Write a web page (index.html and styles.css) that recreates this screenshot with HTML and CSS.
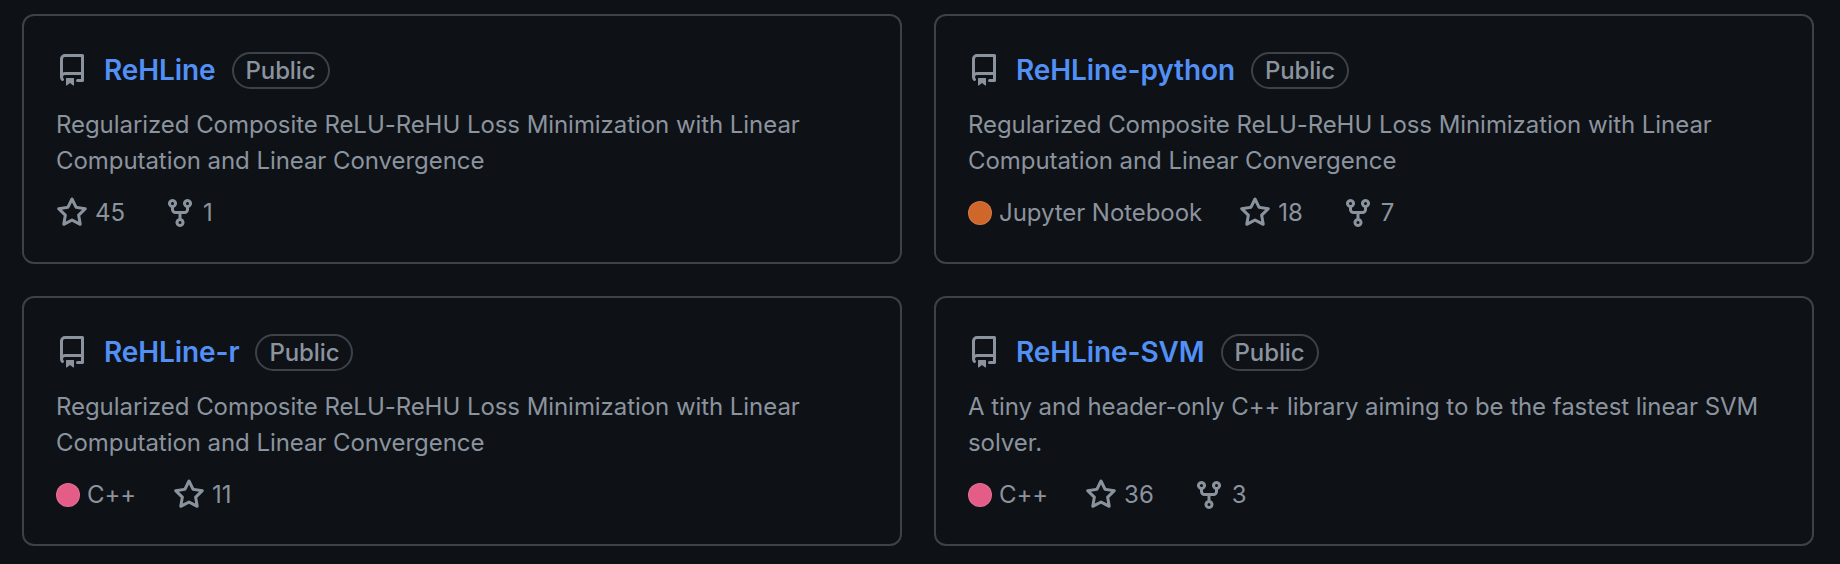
FILE: index.html
```html
<!DOCTYPE html>
<html lang="en">
  <head>
    <meta charset="UTF-8" />
    <title>Pinned repositories</title>
    <link rel="stylesheet" href="styles.css">
  </head>
  <body>
    <svg class="sprite" xmlns="http://www.w3.org/2000/svg">
      <symbol id="repo" viewBox="0 0 16 16"><path d="M2 2.5A2.5 2.5 0 0 1 4.5 0h8.75a.75.75 0 0 1 .75.75v12.5a.75.75 0 0 1-.75.75h-2.5a.75.75 0 0 1 0-1.5h1.75v-2h-8a1 1 0 0 0-.714 1.7.75.75 0 1 1-1.072 1.05A2.495 2.495 0 0 1 2 11.5Zm10.5-1h-8a1 1 0 0 0-1 1v6.708A2.486 2.486 0 0 1 4.5 9h8ZM5 12.25a.25.25 0 0 1 .25-.25h3.5a.25.25 0 0 1 .25.25v3.25a.25.25 0 0 1-.4.2l-1.45-1.087a.249.249 0 0 0-.3 0L5.4 15.7a.25.25 0 0 1-.4-.2Z"/></symbol>
      <symbol id="star" viewBox="0 0 16 16"><path d="M8 .25a.75.75 0 0 1 .673.418l1.882 3.815 4.21.612a.75.75 0 0 1 .416 1.279l-3.046 2.97.719 4.192a.751.751 0 0 1-1.088.791L8 12.347l-3.766 1.98a.75.75 0 0 1-1.088-.79l.72-4.194L.818 6.374a.75.75 0 0 1 .416-1.28l4.21-.611L7.327.668A.75.75 0 0 1 8 .25Zm0 2.445L6.615 5.5a.75.75 0 0 1-.564.41l-3.097.45 2.24 2.184a.75.75 0 0 1 .216.664l-.528 3.084 2.769-1.456a.75.75 0 0 1 .698 0l2.77 1.456-.53-3.084a.75.75 0 0 1 .216-.664l2.24-2.183-3.096-.45a.75.75 0 0 1-.564-.41L8 2.694Z"/></symbol>
      <symbol id="fork" viewBox="0 0 16 16"><path d="M5 5.372v.878c0 .414.336.75.75.75h4.5a.75.75 0 0 0 .75-.75v-.878a2.25 2.25 0 1 1 1.5 0v.878a2.25 2.25 0 0 1-2.25 2.25h-1.5v2.128a2.251 2.251 0 1 1-1.5 0V8.5h-1.5A2.25 2.25 0 0 1 3.5 6.25v-.878a2.25 2.25 0 1 1 1.5 0ZM5 3.25a.75.75 0 1 0-1.5 0 .75.75 0 0 0 1.5 0Zm6.75.75a.75.75 0 1 0 0-1.5.75.75 0 0 0 0 1.5Zm-3 8.75a.75.75 0 1 0-1.5 0 .75.75 0 0 0 1.5 0Z"/></symbol>
    </svg>

    <div class="pinned">
      <div class="card">
        <div class="title">
          <svg class="icon repo-icon"><use href="#repo"></use></svg>
          <a class="name">ReHLine</a>
          <span class="badge">Public</span>
        </div>
        <p class="desc">Regularized Composite ReLU-ReHU Loss Minimization with Linear Computation and Linear Convergence</p>
        <div class="meta">
          <span class="stat"><svg class="icon"><use href="#star"></use></svg>45</span>
          <span class="stat"><svg class="icon"><use href="#fork"></use></svg>1</span>
        </div>
      </div>

      <div class="card">
        <div class="title">
          <svg class="icon repo-icon"><use href="#repo"></use></svg>
          <a class="name">ReHLine-python</a>
          <span class="badge">Public</span>
        </div>
        <p class="desc">Regularized Composite ReLU-ReHU Loss Minimization with Linear Computation and Linear Convergence</p>
        <div class="meta">
          <span class="lang"><span class="dot jupyter"></span>Jupyter Notebook</span>
          <span class="stat"><svg class="icon"><use href="#star"></use></svg>18</span>
          <span class="stat"><svg class="icon"><use href="#fork"></use></svg>7</span>
        </div>
      </div>

      <div class="card">
        <div class="title">
          <svg class="icon repo-icon"><use href="#repo"></use></svg>
          <a class="name">ReHLine-r</a>
          <span class="badge">Public</span>
        </div>
        <p class="desc">Regularized Composite ReLU-ReHU Loss Minimization with Linear Computation and Linear Convergence</p>
        <div class="meta">
          <span class="lang"><span class="dot cpp"></span>C++</span>
          <span class="stat"><svg class="icon"><use href="#star"></use></svg>11</span>
        </div>
      </div>

      <div class="card">
        <div class="title">
          <svg class="icon repo-icon"><use href="#repo"></use></svg>
          <a class="name">ReHLine-SVM</a>
          <span class="badge">Public</span>
        </div>
        <p class="desc">A tiny and header-only C++ library aiming to be the fastest linear SVM solver.</p>
        <div class="meta">
          <span class="lang"><span class="dot cpp"></span>C++</span>
          <span class="stat"><svg class="icon"><use href="#star"></use></svg>36</span>
          <span class="stat"><svg class="icon"><use href="#fork"></use></svg>3</span>
        </div>
      </div>
    </div>
  </body>
</html>
```

FILE: styles.css
```css
body {
  margin: 0;
  background-color: #0e1116;
  font-family: Inter, "Liberation Sans", sans-serif;
  color: #8b949e;
  overflow: hidden;
}
.sprite {
  display: none;
}
.pinned {
  display: grid;
  grid-template-columns: 880px 880px;
  grid-auto-rows: 250px;
  gap: 32px;
  padding: 14px 0 0 22px;
}
.card {
  box-sizing: border-box;
  border: 2px solid #3d4249;
  border-radius: 12px;
  padding: 35px 32px 0;
}
.title {
  display: flex;
  align-items: center;
  height: 38px;
}
.icon {
  width: 32px;
  height: 32px;
  fill: #8b949e;
  flex-shrink: 0;
}
.repo-icon {
  margin-right: 16px;
}
.name {
  font-size: 28px;
  font-weight: 600;
  letter-spacing: -0.1px;
  color: #5290f5;
}
.badge {
  margin-left: 16px;
  padding: 0 12px;
  height: 37px;
  box-sizing: border-box;
  line-height: 34px;
  border: 2px solid #3d4249;
  border-radius: 19px;
  font-size: 24px;
  font-weight: 500;
  letter-spacing: -0.1px;
}
.desc {
  margin: 18px 0 0;
  font-size: 24px;
  line-height: 36px;
  letter-spacing: -0.06px;
  max-width: 812px;
}
.meta {
  display: flex;
  align-items: center;
  gap: 39px;
  margin-top: 16px;
  font-size: 24px;
  line-height: 36px;
}
.stat {
  display: flex;
  align-items: center;
  gap: 7px;
}
.lang {
  display: flex;
  align-items: center;
  gap: 7px;
  letter-spacing: -0.06px;
  margin-right: -2px;
}
.dot {
  box-sizing: border-box;
  width: 24px;
  height: 24px;
  border-radius: 50%;
  border: 1px solid rgba(255, 255, 255, 0.12);
}
.jupyter {
  background-color: #cf672a;
}
.cpp {
  background-color: #e45c88;
}
```
